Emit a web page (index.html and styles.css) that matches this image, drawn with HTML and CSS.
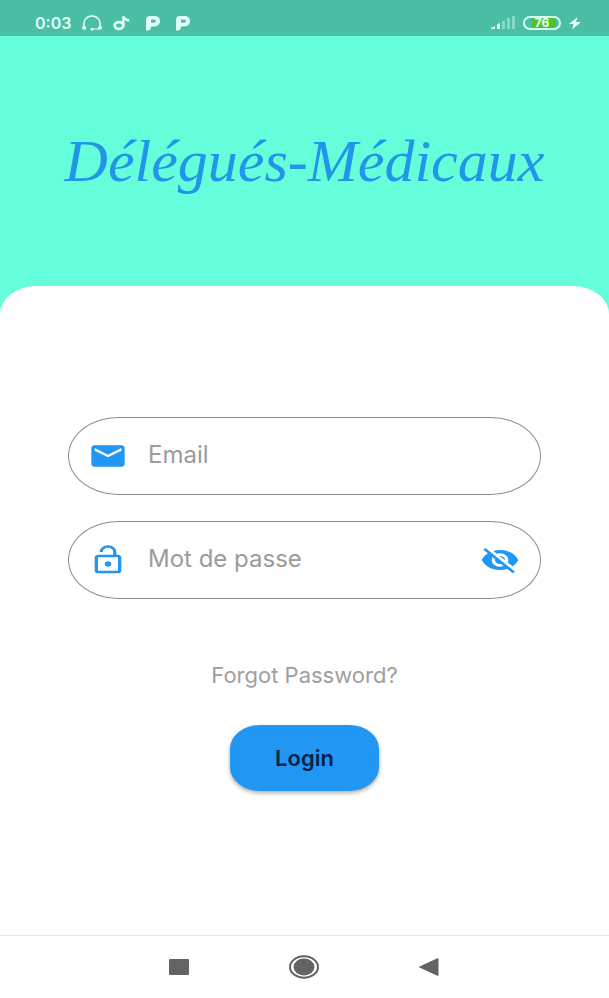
FILE: index.html
```html
<!DOCTYPE html>
<html lang="fr">
<head>
<meta charset="utf-8">
<meta name="viewport" content="width=device-width, initial-scale=1">
<title>Délégués-Médicaux</title>
<link rel="stylesheet" href="styles.css">
</head>
<body>
<div class="status">
  <div class="status-group">
    <span class="clock">0:03</span>
    <svg class="headset" viewBox="0 0 22 16" aria-hidden="true"><path d="M3 12C2 5 6 1 11 1s9 4 8 11" fill="none" stroke="currentColor" stroke-width="1.5"/><path d="M1 11.500h4v3H2.500Q1 14.500 1 11.500zM21 11.500h-4v3h2.500q1.500 0 1.500-3z" fill="currentColor"/><path d="M18 14h-7" stroke="currentColor"/><circle cx="11" cy="14.300" r="1.500" fill="currentColor"/></svg>
    <svg class="note" viewBox="0 0 18 16" aria-hidden="true"><ellipse cx="6" cy="10.500" rx="4.300" ry="3.400" fill="none" stroke="currentColor" stroke-width="2.600"/><path d="M10.300 11V1.500c1 2.700 3 3.500 6 4" fill="none" stroke="currentColor" stroke-width="2.400"/></svg>
    <svg class="pmark" viewBox="0 0 16 16" preserveAspectRatio="none" aria-hidden="true"><path fill="currentColor" fill-rule="evenodd" d="M1 5q0-4 4-4h4.500C13.500 1 15 3.500 15 6s-2 5.500-5.500 5.500H6q0 4-3.500 4H1zM6 4.500v3.200h3q2 0 2-1.600T9 4.500z"/></svg>
    <svg class="pmark" viewBox="0 0 16 16" preserveAspectRatio="none" aria-hidden="true"><path fill="currentColor" fill-rule="evenodd" d="M1 5q0-4 4-4h4.500C13.500 1 15 3.500 15 6s-2 5.500-5.500 5.500H6q0 4-3.500 4H1zM6 4.500v3.200h3q2 0 2-1.600T9 4.500z"/></svg>
  </div>
  <div class="status-group status-right">
    <svg class="signal" viewBox="0 0 24 13" aria-hidden="true"><g fill="currentColor"><path d="M0 13v-1l4-2v3zM6 8.500 9 7v6H6z"/><path opacity=".4" d="M11 5h3v8h-3zM16 2h3v11h-3zM21 0h3v13h-3z"/></g></svg>
    <span class="battery">76</span>
    <svg class="bolt" viewBox="0 0 12 14" aria-hidden="true"><path fill="currentColor" d="M8.500 1 0 8h4.500L3 13.500 12 6H7z"/></svg>
  </div>
</div>
<header class="hero"><h1>Délégués-Médicaux</h1></header>
<main class="sheet">
  <form class="form">
    <div class="field">
      <label for="email" aria-label="Email"><svg class="icon" viewBox="0 0 24 24" preserveAspectRatio="none" aria-hidden="true"><path d="M20 4H4c-1.100 0-2 .9-2 2v12c0 1.100.9 2 2 2h16c1.100 0 2-.9 2-2V6c0-1.100-.9-2-2-2zm0 4-8 5-8-5V6l8 5 8-5v2z"/></svg></label>
      <input id="email" type="email" placeholder="Email">
    </div>
    <div class="field">
      <label for="password" aria-label="Mot de passe"><svg class="icon" viewBox="0 0 24 24" preserveAspectRatio="none" aria-hidden="true"><path d="M12 17c1.100 0 2-.9 2-2s-.9-2-2-2-2 .9-2 2 .9 2 2 2zm6-9h-1V6c0-2.760-2.240-5-5-5S7 3.240 7 6h1.900c0-1.710 1.390-3.100 3.100-3.100s3.100 1.390 3.100 3.100v2H6c-1.100 0-2 .9-2 2v10c0 1.100.9 2 2 2h12c1.100 0 2-.9 2-2V10c0-1.100-.9-2-2-2zm0 12H6V10h12v10z"/></svg></label>
      <input id="password" type="password" placeholder="Mot de passe">
      <button class="reveal" type="button" aria-label="Afficher le mot de passe"><svg class="icon" viewBox="0 0 24 24" preserveAspectRatio="none" aria-hidden="true"><path d="M12 7c2.760 0 5 2.240 5 5 0 .65-.13 1.260-.36 1.830l2.920 2.920c1.510-1.260 2.700-2.890 3.430-4.750-1.730-4.390-6-7.500-11-7.500-1.400 0-2.740.25-3.980.7l2.160 2.160C10.740 7.130 11.350 7 12 7zM2 4.270l2.280 2.280.46.46C3.080 8.300 1.780 10.020 1 12c1.730 4.390 6 7.500 11 7.500 1.550 0 3.030-.3 4.380-.84l.42.42L19.730 22 21 20.730 3.270 3 2 4.270zM7.530 9.800l1.550 1.550c-.05.21-.08.43-.08.65 0 1.660 1.340 3 3 3 .22 0 .44-.03.65-.08l1.550 1.550c-.67.33-1.410.53-2.200.53-2.760 0-5-2.240-5-5 0-.79.2-1.530.53-2.200zm4.310-.78 3.150 3.150.02-.16c0-1.660-1.340-3-3-3l-.17.010z"/></svg></button>
    </div>
    <a class="forgot" href="#">Forgot Password?</a>
    <button class="login" type="submit">Login</button>
  </form>
</main>
<nav class="nav" aria-label="Navigation">
  <button type="button" aria-label="Recents"><svg viewBox="0 0 32 24" aria-hidden="true"><rect x="6" y="4" width="20" height="16" rx="1"/></svg></button>
  <button type="button" aria-label="Home"><svg viewBox="0 0 32 24" aria-hidden="true"><ellipse cx="16" cy="12" rx="10.500" ry="8.500"/><ellipse cx="16" cy="12" rx="14" ry="10.700" fill="none" stroke="#636363" stroke-width="2"/></svg></button>
  <button type="button" aria-label="Back"><svg viewBox="0 0 32 24" aria-hidden="true"><path d="M6.500 12 25 3.500v17z" stroke="#636363" stroke-linejoin="round"/></svg></button>
</nav>
</body>
</html>
```
FILE: styles.css
```css
* { box-sizing: border-box; }

body {
  margin: 0;
  min-height: 100vh;
  display: flex;
  flex-direction: column;
  background: #64ffda;
  font-family: Inter, Roboto, sans-serif;
}

svg { display: block; }

button {
  padding: 0;
  border: 0;
  background: none;
  font: inherit;
}

.status {
  height: 36px;
  padding: 9px 28px 0 35px;
  display: flex;
  justify-content: space-between;
  background: #4bbfa5;
  color: #e4fff8;
}

.status-group {
  display: flex;
  align-items: center;
  gap: 10px;
}

.clock {
  font-size: 16px;
  font-weight: 600;
}

.headset { width: 22px; height: 16px; }
.note { width: 18px; height: 16px; }
.pmark { width: 16px; height: 16px; margin-left: 4px; }
.status-right { gap: 8px; }
.signal { width: 24px; height: 13px; }

.battery {
  width: 38px;
  height: 14px;
  border: 2px solid #d5fff2;
  border-radius: 7px;
  background: linear-gradient(to right, #4bbfa5 20%, #4fc32e 20%, #4fc32e 90%, #4bbfa5 90%);
  font-size: 12px;
  font-weight: 700;
  line-height: 10px;
  text-align: center;
}

.bolt { width: 12px; height: 14px; }

.hero {
  height: 250px;
  display: flex;
  align-items: center;
  justify-content: center;
}

.hero h1 {
  margin: 0;
  color: #2196e9;
  font-family: "Liberation Serif", serif;
  font-size: 60px;
  font-style: italic;
  font-weight: 400;
  line-height: 72px;
}

.sheet {
  flex: 1;
  padding: 131px 68px 40px;
  border-radius: 36px 36px 0 0 / 28px 28px 0 0;
  background: #fff;
}

.form {
  display: flex;
  flex-direction: column;
  align-items: center;
}

.field {
  width: 100%;
  height: 78px;
  margin-bottom: 26px;
  padding: 0 20px 0 19px;
  display: flex;
  align-items: center;
  gap: 20px;
  border: 1px solid #8f8f8f;
  border-radius: 50px / 39px;
}

.field input {
  flex: 1;
  min-width: 0;
  padding: 0 0 2px;
  border: 0;
  outline: 0;
  background: none;
  color: #333;
  font: 24px/32px Inter, Roboto, sans-serif;
}

.field input::placeholder {
  color: #9b9b9b;
  opacity: 1;
}

.icon {
  width: 40px;
  height: 32px;
  fill: #2196f3;
}

.forgot {
  margin: 37px 0;
  color: #9e9e9e;
  font-size: 22px;
  line-height: 26px;
  text-decoration: none;
}

.login {
  width: 149px;
  height: 66px;
  border-radius: 30px / 24px;
  background: #2196f3;
  box-shadow: 0 2px 4px #0005;
  color: #0a2245;
  font-size: 22px;
  font-weight: 600;
}

.nav {
  height: 63px;
  padding-right: 2px;
  display: flex;
  align-items: center;
  justify-content: center;
  gap: 93px;
  border-top: 1px solid #e6e6e6;
  background: #fff;
}

.nav svg {
  width: 32px;
  height: 24px;
  fill: #636363;
}
```
